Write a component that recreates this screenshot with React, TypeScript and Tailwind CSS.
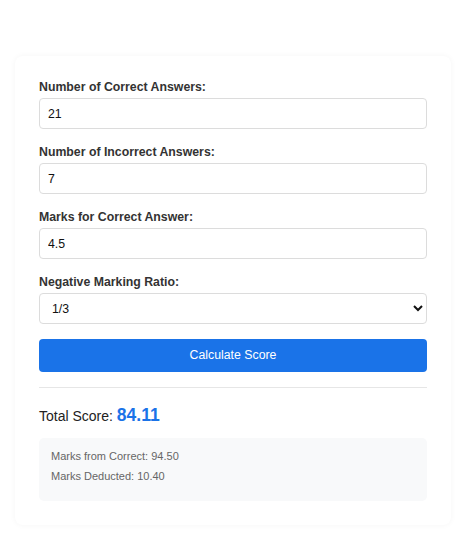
import React from "react";

const font = { fontFamily: '"Liberation Sans", Arial, sans-serif' };

function Field({ label, value, mb = "mb-[16px]" }: { label: string; value: string; mb?: string }) {
  return (
    <div className={mb}>
      <label className="block text-[12.3px] leading-[14px] font-bold text-[#333] mb-[4px]">{label}</label>
      <input
        type="text"
        defaultValue={value}
        className="block w-full h-[31px] border border-[#dcdcdc] rounded-[4px] px-[8px] text-[12.3px] text-[#111] bg-white outline-none"
      />
    </div>
  );
}

export default function App() {
  return (
    <div className="min-h-[536px] bg-white pt-[56px] px-[15px]" style={font}>
      <div className="w-[436px] bg-white rounded-[8px] shadow-[0_0_6px_rgba(0,0,0,0.045)] p-6">
        <Field label="Number of Correct Answers:" value="21" />
        <Field label="Number of Incorrect Answers:" value="7" />
        <Field label="Marks for Correct Answer:" value="4.5" />
        <div className="mb-[15px]">
          <label className="block text-[12.3px] leading-[14px] font-bold text-[#333] mb-[4px]">Negative Marking Ratio:</label>
          <select
            defaultValue="1/3"
            className="block w-full h-[31px] border border-[#dcdcdc] rounded-[4px] px-[8px] text-[12.3px] text-[#111] bg-white outline-none"
          >
            <option value="1/3">1/3</option>
            <option value="1/4">1/4</option>
            <option value="1/2">1/2</option>
          </select>
        </div>
        <button className="block w-full h-[33px] rounded-[4px] bg-[#1a73e8] text-white text-[12.3px]">
          Calculate Score
        </button>
        <div className="mt-[15px] mb-[15px] border-t border-[#e6e6e6]" />
        <div className="leading-[24px] text-[14px] text-[#222]">
          Total Score: <span className="text-[17.5px] font-bold text-[#1a73e8]">84.11</span>
        </div>
        <div className="mt-[10px] bg-[#f8f9fa] rounded-[5px] pt-[8px] pb-[15px] px-[12px] text-[11px] leading-[20px] text-[#666]">
          <div>Marks from Correct: 94.50</div>
          <div>Marks Deducted: 10.40</div>
        </div>
      </div>
    </div>
  );
}
